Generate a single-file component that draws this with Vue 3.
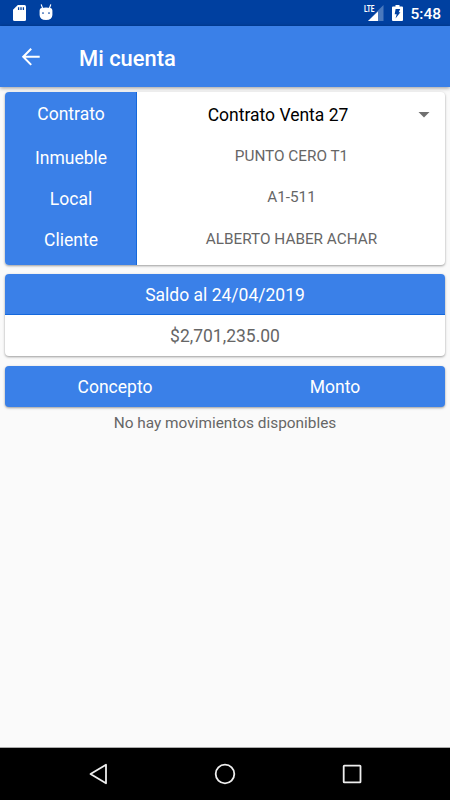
<script setup>
const details = [
  { label: 'Inmueble', value: 'PUNTO CERO T1' },
  { label: 'Local', value: 'A1-511' },
  { label: 'Cliente', value: 'ALBERTO HABER ACHAR' },
]
</script>

<template>
  <div class="screen">
    <div class="status">
      <svg class="sd" width="13" height="16" viewBox="0 0 13 16">
        <path d="M4.800 0H11.500Q13 0 13 1.500V14.500Q13 16 11.500 16H1.500Q0 16 0 14.500V4.800Z" fill="#fff" />
        <path d="M5.600 2.200V5M8 2.200V5M10.400 2.200V5" stroke="#0040a0" stroke-width="1.300" />
      </svg>
      <svg class="droid" width="14" height="17" viewBox="0 0 14 17">
        <path d="M2.300 .7L3.500 4M11.700 .7L10.500 4" stroke="#fff" stroke-width="1.100" stroke-linecap="round" />
        <path d="M2.500 4Q7 3.200 11.500 4Q13.400 4.300 13.400 6.500V11Q13.200 16 7 16Q.8 16 .6 11V6.500Q.6 4.300 2.500 4Z" fill="#fff" />
        <circle cx="4" cy="9" r=".85" fill="#0040a0" />
        <circle cx="10" cy="9" r=".85" fill="#0040a0" />
      </svg>
      <div class="network">
        <svg width="20" height="16" viewBox="0 0 20 16">
          <path d="M19.500 0V16H4L15 4.600Z" fill="#4a79bd" />
          <path d="M14 6.500V16H4Z" fill="#fff" />
        </svg>
        <svg class="lte" width="14" height="14" viewBox="0 0 14 14">
          <text x="1" y="10.300" textLength="10.500" lengthAdjust="spacingAndGlyphs">LTE</text>
        </svg>
      </div>
      <svg class="battery" width="11" height="16" viewBox="0 0 11 16">
        <path d="M3.500 0H7.500V1.500H10Q11 1.500 11 2.500V15Q11 16 10 16H1Q0 16 0 15V2.500Q0 1.500 1 1.500H3.500Z" fill="#fff" />
        <path d="M3.600 4H8.200L6.700 7.200H8.400L3.500 13.500L4.700 9.300H2.700Z" fill="#0040a0" />
      </svg>
      <span class="clock">5:48</span>
    </div>

    <header class="bar">
      <svg width="20" height="20" viewBox="0 0 20 20" fill="none" stroke="#fff" stroke-width="2">
        <path d="M10.200 1.700L2.200 9.800L10.200 17.900M2.400 9.800H18.700" />
      </svg>
      <h1>Mi cuenta</h1>
    </header>

    <main>
      <section class="card contract">
        <div class="labels">
          <span class="first">Contrato</span>
          <span v-for="row in details" :key="row.label">{{ row.label }}</span>
        </div>
        <div class="values">
          <div class="select">
            <span>Contrato Venta 27</span>
            <svg width="12" height="6" viewBox="0 0 12 6"><path d="M.5 0H11.500L6 5.500Z" fill="#707070" /></svg>
          </div>
          <span v-for="row in details" :key="row.label" class="value">{{ row.value }}</span>
        </div>
      </section>

      <section class="card balance">
        <h2>Saldo al 24/04/2019</h2>
        <p>$2,701,235.00</p>
      </section>

      <section class="card columns">
        <span>Concepto</span>
        <span>Monto</span>
      </section>
      <p class="empty">No hay movimientos disponibles</p>
    </main>

    <nav class="navigation">
      <svg width="20" height="22" viewBox="0 0 20 22"><path d="M18 1.700V20.300L2.500 11Z" /></svg>
      <svg width="22" height="22" viewBox="0 0 22 22"><circle cx="11" cy="11" r="9.300" /></svg>
      <svg width="20" height="22" viewBox="0 0 20 22"><rect x="1.700" y="2.600" width="16.800" height="16.800" rx=".6" /></svg>
    </nav>
  </div>
</template>

<style>
body {
  margin: 0;
}
</style>

<style scoped>
.screen {
  width: 450px;
  height: 800px;
  display: flex;
  flex-direction: column;
  overflow: hidden;
  background: #fafafa;
  color: #666;
  font-family: Roboto, sans-serif;
  font-size: 17.5px;
}
.status {
  height: 26px;
  flex: none;
  display: flex;
  box-sizing: border-box;
  padding: 5px 9px 0 13px;
  background: #0040a0;
  color: #fff;
}
.droid {
  margin: -1px 0 0 13px;
}
.network {
  position: relative;
  height: 16px;
  margin-left: auto;
}
.network svg {
  display: block;
}
.network .lte {
  position: absolute;
  left: -1px;
  top: -3px;
  overflow: visible;
  fill: #fff;
  font-size: 9.5px;
  font-weight: 700;
}
.battery {
  margin-left: 8px;
}
.clock {
  margin-left: 7px;
  font-size: 15.5px;
  line-height: 18px;
  font-weight: 500;
}
.bar {
  height: 61px;
  flex: none;
  display: flex;
  align-items: center;
  box-sizing: border-box;
  padding-left: 21px;
  gap: 38px;
  background: #3a80e8;
  color: #fff;
  box-shadow: 0 1px 4px rgba(0, 0, 0, .4);
}
h1 {
  margin: 3px 0 0;
  font-size: 21.9px;
  font-weight: 500;
}
main {
  flex: 1;
  padding: 5px 5px 0;
}
.card {
  border-radius: 4px;
  overflow: hidden;
  background: #fff;
  box-shadow: 0 1px 2.5px rgba(0, 0, 0, .38);
}
.contract {
  display: flex;
  height: 172.5px;
}
.labels {
  width: 132px;
  box-sizing: border-box;
  border-right: 1px solid #1468dc;
  background: #3a80e8;
  color: #fff;
  display: flex;
  flex-direction: column;
  text-align: center;
}
.labels span {
  padding-left: 1px;
  line-height: 41.3px;
}
.labels .first {
  height: 45.5px;
  line-height: 44px;
}
.values {
  flex: 1;
  display: flex;
  flex-direction: column;
  text-align: center;
}
.select {
  height: 44px;
  display: flex;
  align-items: center;
  padding: 1px 15px 0 0;
  box-sizing: border-box;
  color: #000;
}
.select span {
  flex: 1;
  padding-left: 1px;
}
.value {
  padding-left: 1px;
  line-height: 41.3px;
  font-size: 15.3px;
}
.balance {
  margin-top: 9.5px;
}
h2 {
  height: 41px;
  box-sizing: border-box;
  margin: 0;
  border-bottom: 1px solid #1468dc;
  background: #3a80e8;
  color: #fff;
  font-size: 17.5px;
  line-height: 42px;
  font-weight: 400;
  text-align: center;
}
p {
  margin: 0;
  height: 41px;
  line-height: 43px;
  text-align: center;
}
.columns {
  display: flex;
  height: 41px;
  margin-top: 9.5px;
  background: #3a80e8;
  color: #fff;
}
.columns span {
  flex: 1;
  line-height: 42px;
  text-align: center;
}
.empty {
  padding-top: 7px;
  font-size: 15.4px;
  line-height: 18px;
}
.navigation {
  height: 53px;
  flex: none;
  display: flex;
  justify-content: space-between;
  align-items: center;
  box-sizing: border-box;
  padding: 0 88px;
  border-top: 1px solid #aaa;
  background: #000;
}
.navigation svg {
  fill: none;
  stroke: #eee;
  stroke-width: 1.8;
  stroke-linejoin: round;
}
</style>
